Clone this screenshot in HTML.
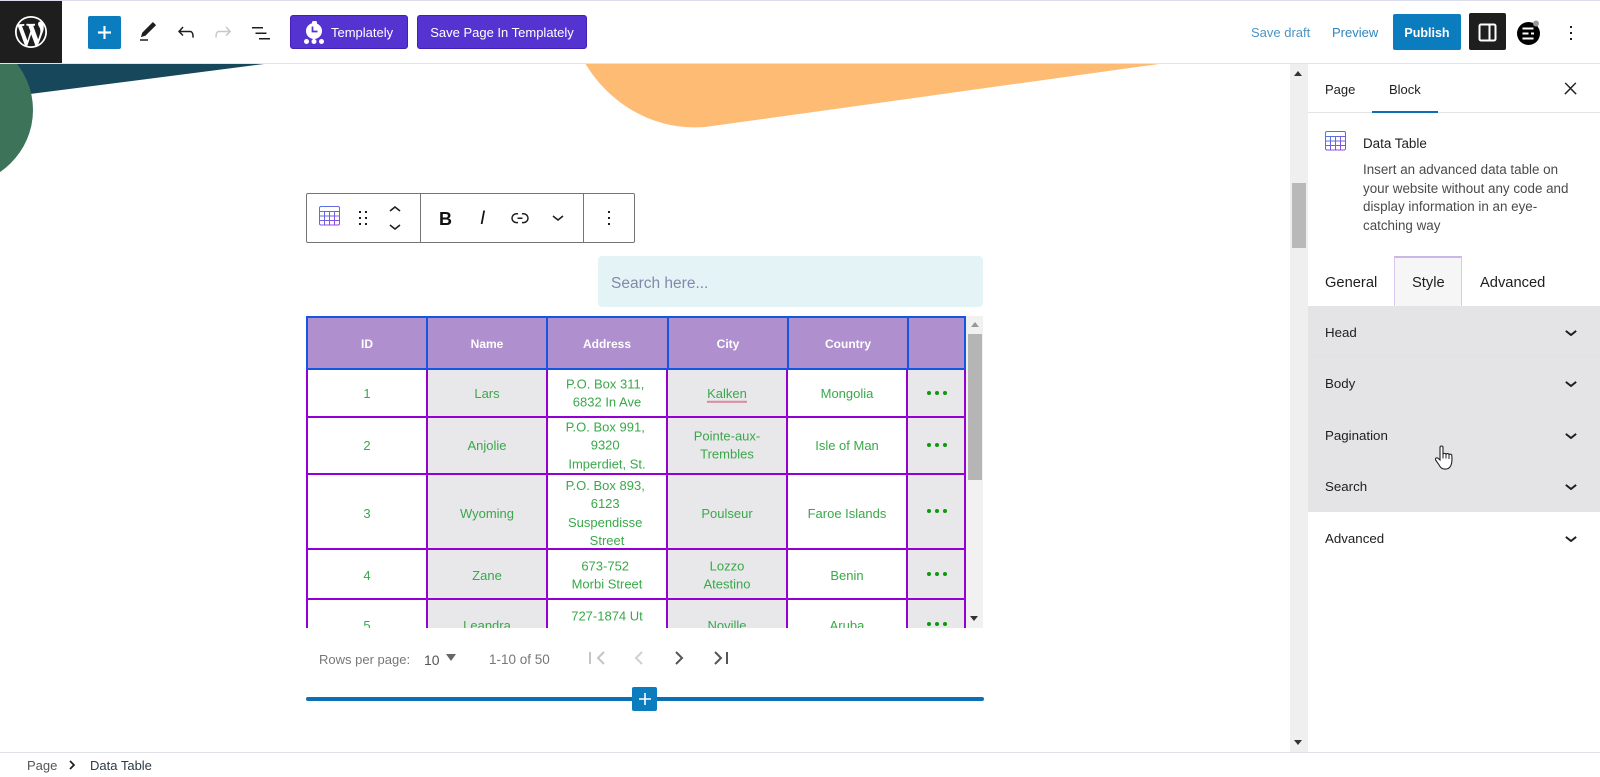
<!DOCTYPE html>
<html lang="en"><head><meta charset="utf-8"><title>Data Table</title>
<style>
html,body{margin:0;padding:0;width:1600px;height:777px;overflow:hidden;background:#fff}
body{position:relative;font-family:"Liberation Sans",sans-serif;font-size:13px;color:#1e1e1e}
.a{position:absolute}
.t{position:absolute;white-space:nowrap;line-height:16px}
svg{position:absolute;display:block}
.btn{position:absolute;background:#5533d1;border:1px solid #4520b8;border-radius:3px;box-sizing:border-box;color:#fff;height:34px;top:15px;line-height:33px;font-size:13px}
.cell{position:absolute;text-align:center;color:#3aa84a;font-size:13px;line-height:18.4px;transform:translateY(-50%);margin-top:1px}
.h{position:absolute;top:336px;width:120px;text-align:center;color:#fff;font-weight:bold;font-size:12px;line-height:16px}
.v{position:absolute;width:2px;background:#9400d3;top:54px;height:260px}
.hz{position:absolute;height:2px;background:#9400d3;left:0;width:660px}
.g{position:absolute;background:#e8e7ea;top:54px;height:260px}
.dots{position:absolute;width:20px;height:4px}
.dots i{position:absolute;width:4px;height:4px;border-radius:50%;background:#0a9a0a;top:0}
.dots i:nth-child(1){left:0}.dots i:nth-child(2){left:8px}.dots i:nth-child(3){left:16px}
.row{position:absolute;left:1325px;font-size:13.300px;line-height:16px;color:#1e1e1e}
.ch{stroke:#1e1e1e;stroke-width:.5}
</style></head><body>
<svg width="0" height="0" style="position:absolute"><defs>
<symbol id="chev" viewBox="0 0 24 24"><path d="M17.500 11.600L12 16l-5.500-4.400.9-1.200L12 14l4.500-3.600 1 1.200z"/></symbol>
<symbol id="up" viewBox="0 0 24 24"><path d="M6.500 12.400L12 8l5.500 4.400-.9 1.200L12 10l-4.500 3.600-1-1.200z"/></symbol>
<symbol id="more" viewBox="0 0 24 24"><path d="M13 19h-2v-2h2v2zm0-6h-2v-2h2v2zm0-6h-2V5h2v2z"/></symbol>
<linearGradient id="gr" x1="0" y1="0" x2="1" y2="1"><stop offset="0" stop-color="#4a7be0"/><stop offset="1" stop-color="#a13fe0"/></linearGradient>
<symbol id="tbl" viewBox="0 0 21 20"><g fill="none" stroke="url(#gr)" stroke-width="1"><rect x=".5" y=".5" width="20" height="18.500" rx="1.500"/><path d="M.5 5.500h20M.5 10h20M.5 14.500h20M5.500 5.500V19M10.500 5.500V19M15.500 5.500V19"/></g></symbol>
</defs></svg>

<!-- canvas shapes -->
<svg style="left:0;top:63px" width="1290" height="120" viewBox="0 63 1290 120">
<path d="M0 63H272L30 94L0 96Z" fill="#16475a"/>
<ellipse cx="-45" cy="110" rx="78" ry="76" fill="#3d7358"/>
<path d="M585 63C610 105 655 131 705 127L1166 63Z" fill="#fdbb73"/>
</svg>

<!-- header -->
<div class="a" style="left:0;top:0;width:1600px;height:1px;background:#dcdcec"></div>
<div class="a" style="left:0;top:63px;width:1600px;height:1px;background:#e2e4e7"></div>
<div class="a" style="left:0;top:1px;width:62px;height:62px;background:#1e1e1e"></div>
<svg style="left:15px;top:16px" width="32" height="32" viewBox="0 0 20 20" fill="#fff"><path d="M20 10c0-5.510-4.490-10-10-10C4.480 0 0 4.490 0 10c0 5.520 4.480 10 10 10 5.510 0 10-4.480 10-10zM7.780 15.370L4.370 6.220c.55-.02 1.170-.08 1.170-.08.5-.06.44-1.130-.06-1.110 0 0-1.450.11-2.370.11-.18 0-.37 0-.58-.01C4.120 2.690 6.870 1.110 10 1.110c2.330 0 4.450.87 6.050 2.340-.68-.11-1.650.39-1.650 1.580 0 .74.45 1.360.9 2.100.35.61.55 1.360.55 2.460 0 1.490-1.400 5-1.400 5l-3.030-8.370c.54-.02.82-.17.82-.17.5-.05.44-1.250-.06-1.220 0 0-1.440.12-2.380.12-.87 0-2.330-.12-2.330-.12-.5-.03-.56 1.200-.06 1.220l.92.08 1.260 3.410zM17.410 10c.24-.64.74-1.870.43-4.250.7 1.290 1.050 2.710 1.050 4.250 0 3.290-1.730 6.240-4.400 7.780.97-2.590 1.940-5.200 2.920-7.780zM6.100 18.090C3.120 16.650 1.110 13.530 1.110 10c0-1.300.23-2.480.72-3.590C3.250 10.300 4.670 14.200 6.100 18.090zm4.030-6.630l2.580 6.980c-.86.29-1.760.45-2.710.45-.79 0-1.570-.11-2.290-.33.81-2.380 1.620-4.740 2.420-7.100z"/></svg>
<div class="a" style="left:88px;top:16px;width:33px;height:33px;background:#0b7cbe;border-radius:2px"></div>
<svg style="left:92px;top:20px" width="25" height="25" viewBox="0 0 24 24" fill="#fff" stroke="#fff" stroke-width=".5"><path d="M18 11.200h-5.200V6h-1.600v5.200H6v1.600h5.200V18h1.600v-5.200H18z"/></svg>
<svg style="left:136px;top:20px" width="24" height="24" viewBox="0 0 24 24" fill="#1e1e1e"><path d="M20.100 5.100L16.900 2 6.200 12.700l-1.300 4.400 4.500-1.300L20.100 5.100zM4 20.800h8v-1.500H4v1.500z"/></svg>
<svg style="left:174px;top:20px" width="24" height="24" viewBox="0 0 24 24" fill="#1e1e1e"><path d="M18.300 11.700c-.6-.6-1.400-.9-2.300-.9H6.700l2.900-3.300-1.100-1-4.500 5L8.500 16l1-1-2.700-2.700H16c.5 0 .9.2 1.300.5 1 1 1 3.400 1 4.500v.3h1.500v-.2c0-1.500 0-4.300-1.500-5.700z"/></svg>
<svg style="left:211px;top:20px" width="24" height="24" viewBox="0 0 24 24" fill="#c8c8c8"><path d="M15.600 6.500l-1.100 1 2.900 3.300H8c-.9 0-1.700.3-2.300.9-1.400 1.500-1.400 4.200-1.400 5.600v.2h1.500v-.3c0-1.100 0-3.500 1-4.500.3-.3.7-.5 1.300-.5h9.200L14.500 15l1.100 1.100 4.600-4.600-4.600-5z"/></svg>
<svg style="left:249px;top:21px" width="24" height="24" viewBox="0 0 24 24" fill="#1e1e1e"><path d="M3 6h11v1.500H3V6zm3.500 5.500h11V13h-11v-1.500zM21 17H10v1.500h11V17z"/></svg>

<div class="btn" style="left:290px;width:118px;padding-left:40px">Templately</div>
<svg style="left:303px;top:21px" width="22" height="24" viewBox="0 0 22 24" fill="#fff"><circle cx="11" cy="10" r="8"/><rect x="9" y="0" width="5" height="4" rx="1.500"/><circle cx="3.500" cy="20.500" r="2.500"/><circle cx="11" cy="20.500" r="2.500"/><circle cx="18.500" cy="20.500" r="2.500"/><path d="M9.500 5.500v5h5" fill="none" stroke="#5533d1" stroke-width="1.700"/></svg>
<div class="btn" style="left:417px;width:170px;text-align:center">Save Page In Templately</div>

<div class="t" style="left:1251px;top:25px;color:#4c94c4">Save draft</div>
<div class="t" style="left:1332px;top:25px;color:#2f86bd">Preview</div>
<div class="a" style="left:1393px;top:14px;width:68px;height:36px;background:#0b7cbe;border-radius:2px;color:#fff;text-align:center;line-height:38px;font-weight:bold;font-size:12.500px">Publish</div>
<div class="a" style="left:1469px;top:13px;width:37px;height:37px;background:#1e1e1e;border-radius:2px"></div>
<svg style="left:1478px;top:23px" width="19" height="19" fill="none" stroke="#fff" stroke-width="2"><rect x="1.500" y="1.500" width="16" height="16" rx="1.500"/><path d="M11.500 1.500v16"/></svg>
<svg style="left:1515px;top:19px" width="28" height="28" viewBox="0 0 28 28"><circle cx="13.500" cy="14.500" r="11.500" fill="#000"/><circle cx="21" cy="4.500" r="3" fill="#999"/><path d="M7.500 9.500h11M7.500 14.500h6M16 14.500h3M7.500 19.500h11" stroke="#fff" stroke-width="2" fill="none"/></svg>
<svg style="left:1559px;top:21px" width="24" height="24" fill="#1e1e1e"><use href="#more"/></svg>

<!-- main scrollbar -->
<div class="a" style="left:1290px;top:64px;width:18px;height:688px;background:#efefef"></div>
<div class="a" style="left:1292px;top:183px;width:14px;height:65px;background:#b9b9b9"></div>
<div class="a" style="left:1294px;top:71px;width:0;height:0;border:4px solid transparent;border-top:0;border-bottom:5px solid #333"></div>
<div class="a" style="left:1294px;top:740px;width:0;height:0;border:4px solid transparent;border-bottom:0;border-top:5px solid #333"></div>

<!-- block toolbar -->
<div class="a" style="left:306px;top:193px;width:329px;height:50px;border:1px solid #757575;border-radius:2px;box-sizing:border-box;background:#fff"></div>
<div class="a" style="left:420px;top:193px;width:1px;height:50px;background:#757575"></div>
<div class="a" style="left:583px;top:193px;width:1px;height:50px;background:#757575"></div>
<svg style="left:319px;top:206px" width="21" height="20"><use href="#tbl"/></svg>
<svg style="left:351px;top:206px" width="24" height="24" viewBox="0 0 24 24" fill="#1e1e1e"><path d="M8 7h2V5H8v2zm0 6h2v-2H8v2zm0 6h2v-2H8v2zm6-14v2h2V5h-2zm0 8h2v-2h-2v2zm0 6h2v-2h-2v2z"/></svg>
<svg style="left:383px;top:198px" width="24" height="24" fill="#1e1e1e"><use href="#up"/></svg>
<svg style="left:383px;top:214px" width="24" height="24" fill="#1e1e1e"><use href="#chev"/></svg>
<div class="t" style="left:439px;top:209px;font-size:18px;line-height:20px;font-weight:bold;color:#111">B</div>
<div class="t" style="left:480px;top:209px;font-size:19px;line-height:20px;font-style:italic;color:#111">I</div>
<svg style="left:508px;top:206px" width="24" height="24" viewBox="0 0 24 24" fill="#1e1e1e"><path d="M10 17.389H8.444A5.194 5.194 0 1 1 8.444 7H10v1.500H8.444a3.694 3.694 0 0 0 0 7.389H10v1.500ZM14 7h1.556a5.194 5.194 0 0 1 0 10.390H14v-1.500h1.556a3.694 3.694 0 0 0 0-7.390H14V7Zm-4.500 6h5v-1.500h-5V13Z"/></svg>
<svg style="left:546px;top:205px" width="24" height="24" fill="#1e1e1e"><use href="#chev"/></svg>
<svg style="left:597px;top:206px" width="24" height="24" fill="#1e1e1e"><use href="#more"/></svg>

<!-- search -->
<div class="a" style="left:598px;top:256px;width:385px;height:51px;background:#e4f3f5;border-radius:4px"></div>
<div class="t" style="left:611px;top:276px;font-size:15.500px;color:#8289ad">Search here...</div>

<!-- table -->
<div class="a" id="tb" style="left:306px;top:316px;width:660px;height:312px;overflow:hidden;background:#fff">
  <div class="g" style="left:121px;width:120px"></div>
  <div class="g" style="left:361px;width:120px"></div>
  <div class="g" style="left:601px;width:58px"></div>
  <div class="v" style="left:0"></div><div class="v" style="left:120px"></div><div class="v" style="left:240px"></div><div class="v" style="left:360px"></div><div class="v" style="left:480px"></div><div class="v" style="left:600px"></div><div class="v" style="left:658px"></div>
  <div class="hz" style="top:100px"></div><div class="hz" style="top:157px"></div><div class="hz" style="top:232px"></div><div class="hz" style="top:282px"></div>
  <div class="a" style="left:0;top:0;width:660px;height:54px;background:#af8fce;box-sizing:border-box;border:2px solid #1356e0"></div>
  <div class="a" style="left:120px;top:0;width:2px;height:54px;background:#1356e0"></div>
  <div class="a" style="left:240px;top:0;width:2px;height:54px;background:#1356e0"></div>
  <div class="a" style="left:361px;top:0;width:2px;height:54px;background:#1356e0"></div>
  <div class="a" style="left:481px;top:0;width:2px;height:54px;background:#1356e0"></div>
  <div class="a" style="left:601px;top:0;width:2px;height:54px;background:#1356e0"></div>
  <!-- row 1 -->
  <div class="cell" style="left:1px;width:120px;top:77px">1</div>
  <div class="cell" style="left:121px;width:120px;top:77px">Lars</div>
  <div class="cell" style="left:241px;width:120px;top:77px">P.O. Box 311,&nbsp;<br>6832 In Ave</div>
  <div class="cell" style="left:361px;width:120px;top:77px"><span style="border-bottom:2px solid #dd8aa0">Kalken</span></div>
  <div class="cell" style="left:481px;width:120px;top:77px">Mongolia</div>
  <!-- row 2 -->
  <div class="cell" style="left:1px;width:120px;top:129px">2</div>
  <div class="cell" style="left:121px;width:120px;top:129px">Anjolie</div>
  <div class="cell" style="left:241px;width:120px;top:129px">P.O. Box 991,&nbsp;<br>9320&nbsp;<br>Imperdiet, St.</div>
  <div class="cell" style="left:361px;width:120px;top:129px">Pointe-aux-<br>Trembles</div>
  <div class="cell" style="left:481px;width:120px;top:129px">Isle of Man</div>
  <!-- row 3 -->
  <div class="cell" style="left:1px;width:120px;top:197px">3</div>
  <div class="cell" style="left:121px;width:120px;top:197px">Wyoming</div>
  <div class="cell" style="left:241px;width:120px;top:197px">P.O. Box 893,&nbsp;<br>6123&nbsp;<br>Suspendisse&nbsp;<br>Street</div>
  <div class="cell" style="left:361px;width:120px;top:197px">Poulseur</div>
  <div class="cell" style="left:481px;width:120px;top:197px">Faroe Islands</div>
  <!-- row 4 -->
  <div class="cell" style="left:1px;width:120px;top:259px">4</div>
  <div class="cell" style="left:121px;width:120px;top:259px">Zane</div>
  <div class="cell" style="left:241px;width:120px;top:259px">673-752&nbsp;<br>Morbi Street</div>
  <div class="cell" style="left:361px;width:120px;top:259px">Lozzo<br>Atestino</div>
  <div class="cell" style="left:481px;width:120px;top:259px">Benin</div>
  <!-- row 5 -->
  <div class="cell" style="left:1px;width:120px;top:309px">5</div>
  <div class="cell" style="left:121px;width:120px;top:309px">Leandra</div>
  <div class="cell" style="left:241px;width:120px;top:309px">727-1874 Ut<br>Rd.</div>
  <div class="cell" style="left:361px;width:120px;top:309px">Noville</div>
  <div class="cell" style="left:481px;width:120px;top:309px">Aruba</div>
  <div class="dots" style="left:621px;top:75px"><i></i><i></i><i></i></div>
  <div class="dots" style="left:621px;top:127px"><i></i><i></i><i></i></div>
  <div class="dots" style="left:621px;top:193px"><i></i><i></i><i></i></div>
  <div class="dots" style="left:621px;top:256px"><i></i><i></i><i></i></div>
  <div class="dots" style="left:621px;top:306px"><i></i><i></i><i></i></div>
</div>
<div class="h" style="left:307px">ID</div>
<div class="h" style="left:427px">Name</div>
<div class="h" style="left:547px">Address</div>
<div class="h" style="left:668px">City</div>
<div class="h" style="left:788px">Country</div>
<!-- table scrollbar -->
<div class="a" style="left:966px;top:316px;width:17px;height:312px;background:#f1f1f1"></div>
<div class="a" style="left:968px;top:334px;width:14px;height:146px;background:#b5b5b5"></div>
<div class="a" style="left:971px;top:322px;width:0;height:0;border:4px solid transparent;border-top:0;border-bottom:5px solid #999"></div>
<div class="a" style="left:970px;top:616px;width:0;height:0;border:4px solid transparent;border-bottom:0;border-top:5px solid #333"></div>

<!-- pagination -->
<div class="t" style="left:319px;top:652px;color:#777;font-size:13px">Rows per page:</div>
<div class="t" style="left:424px;top:652px;color:#555;font-size:14px">10</div>
<div class="a" style="left:446px;top:654px;width:0;height:0;border:5px solid transparent;border-bottom:0;border-top:7px solid #666"></div>
<div class="t" style="left:489px;top:652px;color:#777;font-size:13.500px">1-10 of 50</div>
<svg style="left:585px;top:646px" width="150" height="24" fill="none" stroke-width="2">
<path d="M5 6v12M19 6l-6 6 6 6" stroke="#c4c4c8"/>
<path d="M57 6l-6 6 6 6" stroke="#d0d0d4"/>
<path d="M91 6l6 6-6 6" stroke="#555"/>
<path d="M130 6l6 6-6 6M142 6v12" stroke="#555"/>
</svg>

<!-- inserter -->
<div class="a" style="left:306px;top:697px;width:678px;height:4px;background:#0b6fb5;border-radius:2px"></div>
<div class="a" style="left:632px;top:687px;width:25px;height:24px;background:#0b7cbe;border-radius:2px"></div>
<svg style="left:632.500px;top:687px" width="24" height="24" viewBox="0 0 24 24" fill="#fff"><path d="M18 11.200h-5.200V6h-1.600v5.200H6v1.600h5.200V18h1.600v-5.200H18z"/></svg>

<!-- sidebar -->
<div class="t" style="left:1325px;top:82px">Page</div>
<div class="t" style="left:1389px;top:82px">Block</div>
<div class="a" style="left:1308px;top:112px;width:292px;height:1px;background:#e2e4e7"></div>
<div class="a" style="left:1372px;top:111px;width:66px;height:2px;background:#0b6fb5"></div>
<svg style="left:1560.500px;top:78.500px" width="19" height="19" viewBox="0 0 24 24" fill="#1e1e1e" stroke="#1e1e1e" stroke-width=".5"><path d="M13 11.800l6.100-6.300-1-1-6.100 6.200-6.100-6.200-1 1 6.100 6.300-6.500 6.700 1 1 6.500-6.600 6.500 6.600 1-1z"/></svg>
<svg style="left:1325px;top:131px" width="21" height="20"><use href="#tbl"/></svg>
<div class="t" style="left:1363px;top:136px;color:#1e1e1e;font-size:13.400px">Data Table</div>
<div class="a" style="left:1363px;top:161px;width:225px;line-height:18.700px;color:#4a4a4a;white-space:nowrap;font-size:13.400px">Insert an advanced data table on<br>your website without any code and<br>display information in an eye-<br>catching way</div>

<div class="t" style="left:1325px;top:275px;font-size:14.700px;color:#1e1e1e">General</div>
<div class="a" style="left:1394px;top:256px;width:68px;height:51px;box-sizing:border-box;background:#f6f6f6;border:1px solid #d9c8ec;border-top:2px solid #cdb6e8;border-bottom:0"></div>
<div class="t" style="left:1412px;top:275px;font-size:14.700px;color:#1e1e1e">Style</div>
<div class="t" style="left:1480px;top:275px;font-size:14.700px;color:#1e1e1e">Advanced</div>

<div class="a" style="left:1308px;top:306px;width:292px;height:206px;background:#e4e4e6"></div>
<div class="a" style="left:1308px;top:356px;width:292px;height:1px;background:#dfe3e3"></div>
<div class="row" style="top:325px">Head</div>
<div class="row" style="top:376px">Body</div>
<div class="row" style="top:427.500px">Pagination</div>
<div class="row" style="top:479px">Search</div>
<div class="row" style="top:530.500px">Advanced</div>
<svg class="ch" style="left:1559px;top:320px" width="24" height="24" fill="#1e1e1e"><use href="#chev"/></svg>
<svg class="ch" style="left:1559px;top:371px" width="24" height="24" fill="#1e1e1e"><use href="#chev"/></svg>
<svg class="ch" style="left:1559px;top:423px" width="24" height="24" fill="#1e1e1e"><use href="#chev"/></svg>
<svg class="ch" style="left:1559px;top:474px" width="24" height="24" fill="#1e1e1e"><use href="#chev"/></svg>
<svg class="ch" style="left:1559px;top:526px" width="24" height="24" fill="#1e1e1e"><use href="#chev"/></svg>
<svg style="left:1435px;top:445px" width="20" height="26" viewBox="0 0 20 26"><path d="M5 2.500c0-2 3-2 3 0v7c.2-1.500 2.800-1.500 3 0 .2-1.300 2.800-1.300 3 .3.300-1 2.700-.8 2.800.8.200 2.500.2 6-.3 8-.6 2.500-1.800 4.900-5 5.400-3 .4-5.400-.4-6.800-3-1.200-2.200-3-4.300-4-5.900-1.100-1.700 1.100-3.100 2.500-1.700L5 15z" fill="#fff" stroke="#222" stroke-width="1.100"/><path d="M8 9.500v4M11 9.500v4M14 10v4" stroke="#222" fill="none"/></svg>

<!-- footer -->
<div class="a" style="left:0;top:752px;width:1600px;height:1px;background:#e0e0e6"></div>
<div class="t" style="left:27px;top:758px;color:#555">Page</div>
<svg style="left:66px;top:759px" width="12" height="12" viewBox="0 0 12 12" fill="none" stroke="#1e1e1e" stroke-width="1.700"><path d="M4 2l4 4-4 4"/></svg>
<div class="t" style="left:90px;top:758px;color:#2c3a4a">Data Table</div>
</body></html>
